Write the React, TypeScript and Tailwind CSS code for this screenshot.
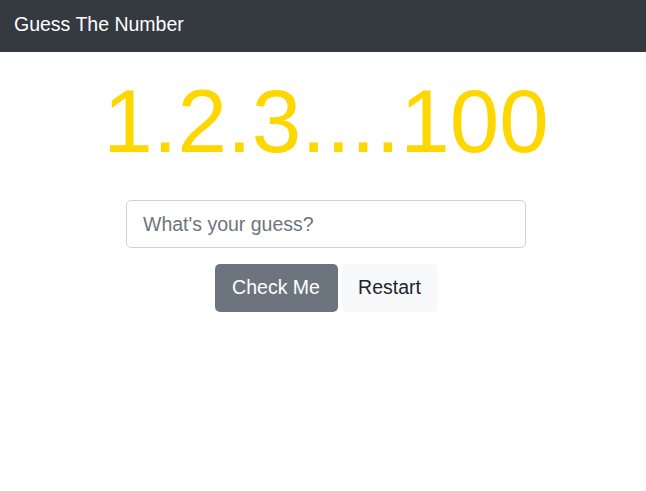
export default function App() {
  return (
    <div className="min-h-[491px] bg-white" style={{ fontFamily: '"Liberation Sans", Arial, sans-serif' }}>
      {/* Navbar */}
      <nav className="h-[52px] bg-[#343a40] flex items-center px-[14px] pb-[2px]">
        <span className="text-[19.5px] text-white leading-none">Guess The Number</span>
      </nav>

      <main className="flex flex-col items-center pl-[6px]">
        <h1 className="mt-[15px] text-[89px] leading-[108px] text-[#ffd700] font-normal">1.2.3....100</h1>

        <input
          type="text"
          placeholder="What's your guess?"
          className="mt-[25px] w-[400px] h-[48px] rounded-[5px] border border-[#ced4da] px-4 text-[19.5px] text-[#495057] placeholder:text-[#6c757d] outline-none"
        />

        <div className="mt-4 flex gap-1">
          <button className="h-[48px] w-[123px] rounded-[5px] bg-[#6c757d] text-white text-[19.5px]">Check Me</button>
          <button className="h-[48px] w-[96px] rounded-[5px] bg-[#f8f9fa] text-[#212529] text-[19.5px]">Restart</button>
        </div>
      </main>
    </div>
  );
}
